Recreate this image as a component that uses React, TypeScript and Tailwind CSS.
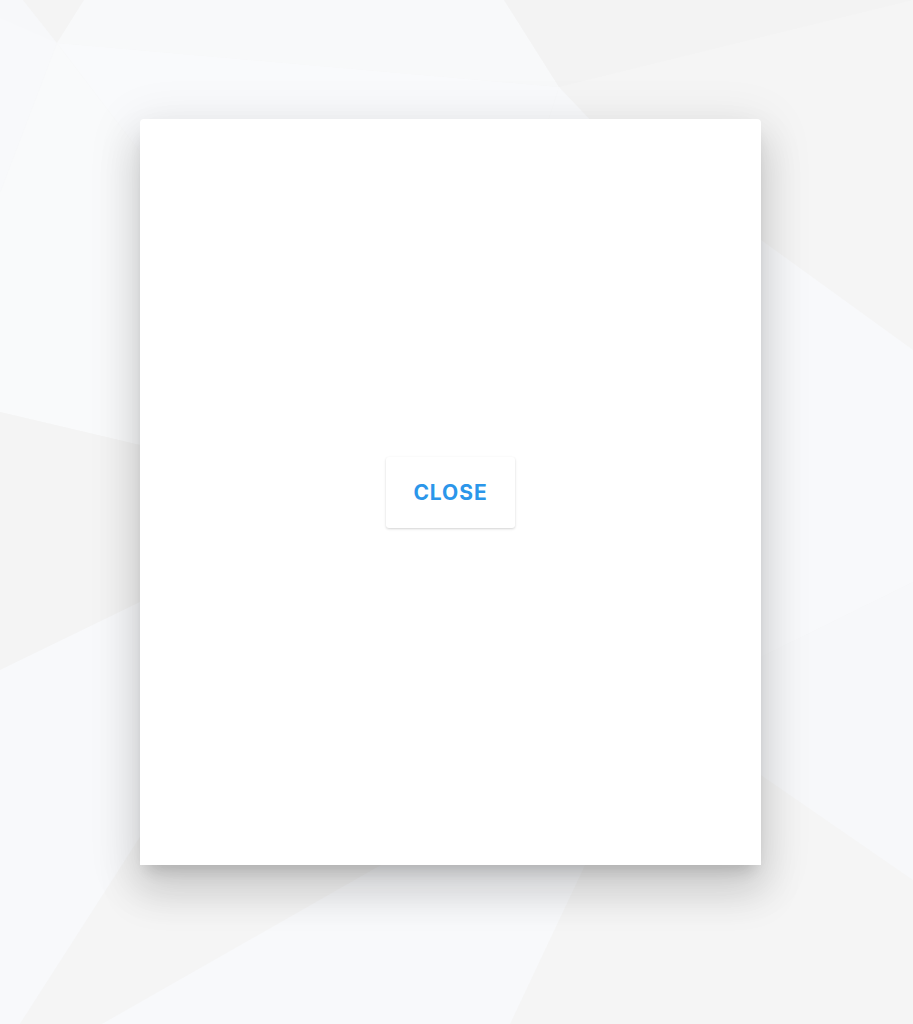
import React from "react";

// low-poly backdrop, drawn as one svg behind the page
const shards: { points: string; fill: string }[] = [
  { points: "0,0 23,0 57,43 0,193", fill: "#f8f9fb" },
  { points: "0,0 23,0 57,43 0,18", fill: "#f7f8fa" },
  { points: "23,0 84,0 57,43", fill: "#f4f4f4" },
  { points: "84,0 504,0 559,87 57,43", fill: "#f8f9fa" },
  { points: "504,0 913,0 559,87", fill: "#f3f3f3" },
  { points: "57,43 559,87 545,130 140,152", fill: "#f9fafc" },
  { points: "559,87 545,130 600,130", fill: "#f9fafc" },
  { points: "57,43 140,152 140,445 0,412 0,193", fill: "#f9fafb" },
  { points: "0,412 140,445 140,602 0,670", fill: "#f4f4f4" },
  { points: "0,670 140,602 140,837 20,1024 0,1024", fill: "#f8f9fb" },
  { points: "140,837 381,865 102,1024 20,1024", fill: "#f5f5f5" },
  { points: "381,865 585,865 510,1024 102,1024", fill: "#f8f9fb" },
  { points: "761,240 913,350 913,582 761,657", fill: "#f8f9fb" },
  { points: "761,657 913,582 913,880 761,775", fill: "#f7f8fa" },
];

const Backdrop = () => (
  <svg
    className="absolute inset-0 h-full w-full"
    viewBox="0 0 913 1024"
    preserveAspectRatio="none"
  >
    <rect width="913" height="1024" fill="#f5f5f5" />
    {shards.map((s, i) => (
      <polygon key={i} points={s.points} fill={s.fill} />
    ))}
  </svg>
);

const App = () => {
  return (
    <div className="relative h-[1024px] w-full overflow-hidden bg-[#f5f5f5] font-['Inter',sans-serif]">
      <Backdrop />

      <div className="relative flex pl-[140px] pt-[119px]">
        <div className="flex h-[746px] w-[621px] items-center justify-center rounded-t-[4px] bg-white shadow-[0_26px_40px_4px_rgba(0,0,0,0.12),0_10px_50px_8px_rgba(0,0,0,0.08),0_11px_15px_-7px_rgba(0,0,0,0.16)]">
          <button className="flex h-[71px] w-[129px] items-center justify-center rounded-[3px] bg-white pt-[2px] text-[21px] font-bold leading-6 tracking-[0.045em] text-[#2b96ea] shadow-[0_1px_3px_rgba(0,0,0,0.12),0_1px_2px_rgba(0,0,0,0.06)]">
            CLOSE
          </button>
        </div>
      </div>
    </div>
  );
};

export default App;
